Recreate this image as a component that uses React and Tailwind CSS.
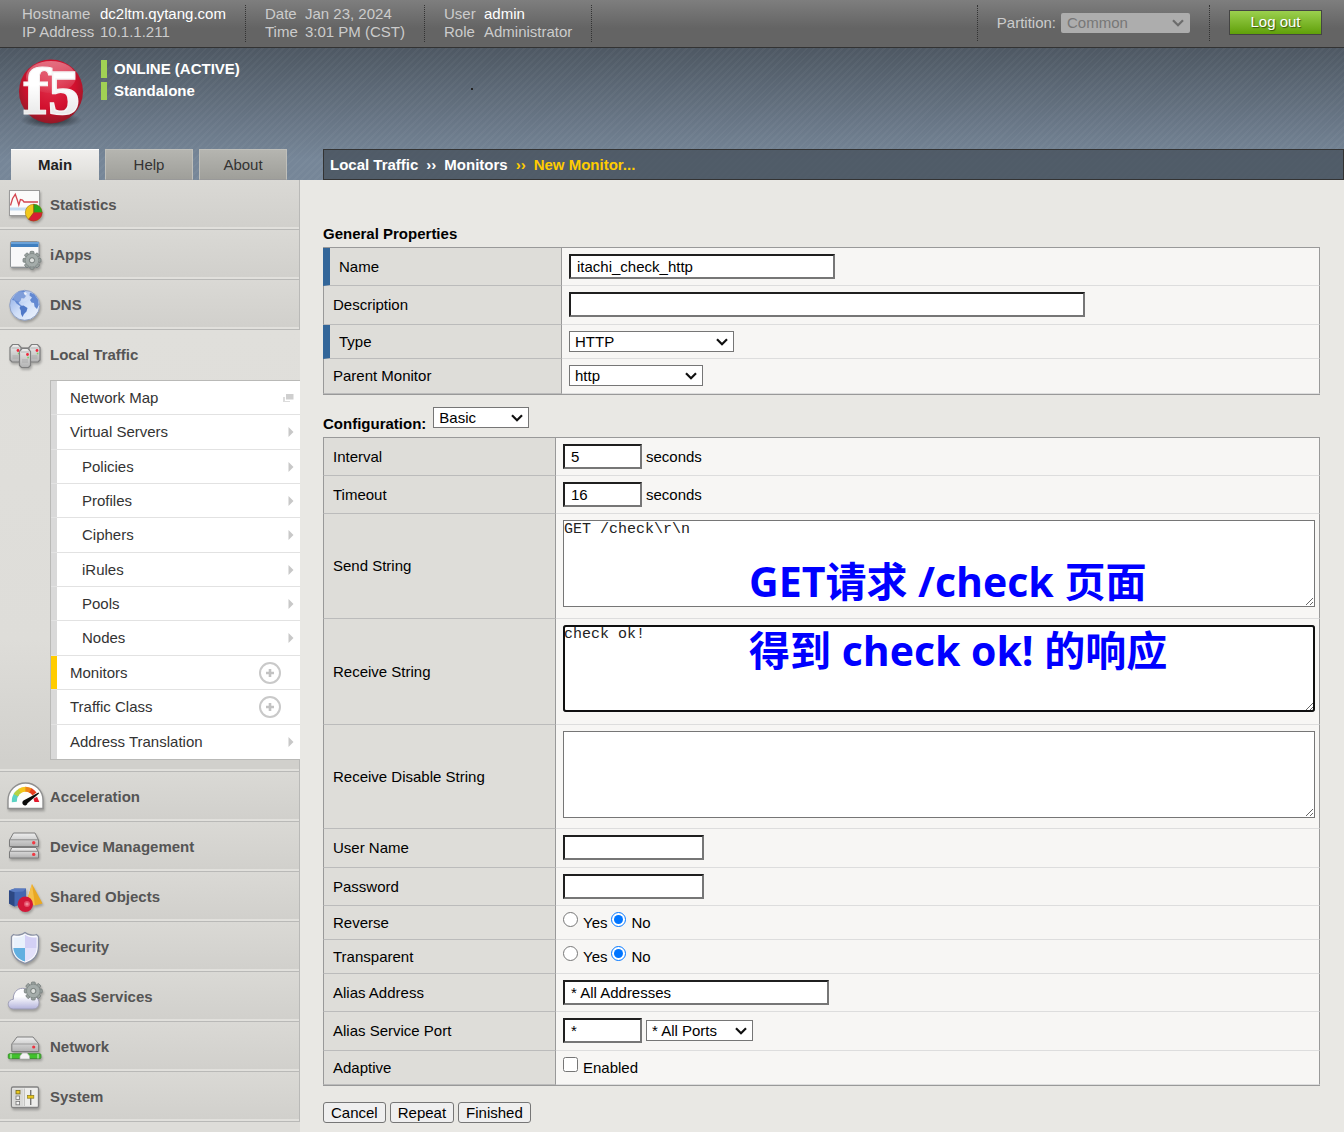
import React from "react";

const gearTeeth = [0, 45, 90, 135, 180, 225, 270, 315];

function Gear({ cx, cy, hub = "#dcdfdd" }) {
  return (
    <g>
      {gearTeeth.map((a) => (
        <rect
          key={a}
          x={cx - 2}
          y={cy - 9}
          width="4"
          height="5"
          rx="1"
          fill="#98a09e"
          stroke="#6f7775"
          strokeWidth="0.7"
          transform={`rotate(${a} ${cx} ${cy})`}
        />
      ))}
      <circle cx={cx} cy={cy} r="6.8" fill="#a4acaa" stroke="#7d8583" strokeWidth="0.7" />
      <circle cx={cx} cy={cy} r="5.6" fill="#a4acaa" />
      <circle cx={cx} cy={cy} r="2.6" fill={hub} stroke="#747c7a" strokeWidth="1" />
    </g>
  );
}

function MiniServer({ x, y, h }) {
  return (
    <g>
      <path
        d={`M${x} ${y + 3} L${x + 2.5} ${y} H${x + 8.5} L${x + 11} ${y + 3} V${y + h - 2} L${x + 9} ${y + h} H${x + 2} L${x} ${y + h - 2} Z`}
        fill="url(#metal)"
        stroke="#7f7f7f"
        strokeWidth="1.2"
      />
      <path d={`M${x + 1.5} ${y + 3.5} H${x + 9.5}`} stroke="#a9a9a9" strokeWidth="0.8" />
      <circle cx={x + 8} cy={y + 6} r="1.4" fill="#f0283c" />
      <rect x={x + 7.8} y={y + 8.2} width="1.6" height="1.6" fill="#7ccf6a" />
      <path d={`M${x + 2.5} ${y + 11.5} H${x + 8.5} M${x + 2.5} ${y + 13.5} H${x + 8.5}`} stroke="#a5a5a5" strokeWidth="0.8" />
    </g>
  );
}

const icons = {
  statistics: (
    <>
      <rect x="9.5" y="10.5" width="30" height="25" fill="#fbfbfb" stroke="#9a9a9a" />
      <rect x="10" y="27.5" width="29" height="3" fill="#c5dcf2" />
      <path d="M10.5 25.5 L12.6 18.5 L15.3 14.3 L17.3 20 L18.8 25 L20.4 19.5 L22.5 20 L24 22 H38" fill="none" stroke="#d4454f" strokeWidth="1.3" />
      <circle cx="33.7" cy="32.6" r="8.6" fill="#f2c81c" />
      <path d="M33.7 32.6 V24 A8.6 8.6 0 0 1 42.3 32.6 Z" fill="#27a81d" />
      <path d="M33.7 32.6 H42.3 A8.6 8.6 0 0 1 28.5 39.4 Z" fill="#d81e35" />
      <path d="M33.7 24 V32.6 L28.5 39.4 M33.7 32.6 H42.3" stroke="#8a4a12" strokeWidth="0.7" fill="none" />
      <circle cx="33.7" cy="32.6" r="8.4" fill="none" stroke="#7a5a20" strokeOpacity="0.6" strokeWidth="0.7" />
    </>
  ),
  iapps: (
    <>
      <rect x="10.5" y="11.5" width="28.5" height="26" rx="1.5" fill="#f8f8f9" stroke="#8e9296" />
      <rect x="11" y="12" width="27.5" height="5" fill="#3f7fc0" />
      <rect x="11" y="12" width="27.5" height="2" fill="#6ba2d8" />
      <path d="M12 36.5 H26" stroke="#d5d5d5" />
      <Gear cx={32} cy={30.3} />
    </>
  ),
  dns: (
    <>
      <circle cx="24.7" cy="25.3" r="15" fill="url(#globe)" stroke="#8fa0c4" />
      <path d="M12 20 L15 14.5 L19 11.8 L24 10.8 L26 12.5 L24.5 14.5 L26 16 L24 18.5 L21.5 18 L20.5 21 L18.5 22.5 L20 24.5 L22 25.5 L20 26 L16.5 23.5 L14.5 20.5 Z" fill="#6389d2" />
      <path d="M20.5 26 L23.5 25.5 L27.5 28 L26.5 31.5 L24 34 L22.5 37 L21 34 L20.8 30.5 L19.5 28 Z" fill="#4f78c8" />
      <path d="M30 12.5 L34.5 14.5 L38 19.5 L38.8 25 L37 29 L34.5 26.5 L34 23 L31.5 22.5 L30 20 L32 17.5 L29.5 15.5 Z" fill="#6389d2" />
      <path d="M23.5 12.5 L25.5 12 L27 14 L25 15 Z" fill="#eef3fc" />
      <ellipse cx="21" cy="17" rx="8" ry="5" fill="#fff" fillOpacity="0.18" />
    </>
  ),
  traffic: (
    <>
      <path d="M18 18 H32 M19 29 H31" stroke="#8a8a8a" strokeWidth="1.4" />
      <MiniServer x={10} y={14.5} h={17.5} />
      <MiniServer x={29} y={14.5} h={17.5} />
      <MiniServer x={19.5} y={18.5} h={19} />
    </>
  ),
  acceleration: (
    <>
      <path d="M8 36.5 V28 A17.5 17 0 0 1 43 28 V36.5 Z" fill="#fdfdfd" stroke="#8f8f8f" strokeWidth="1.4" />
      <path d="M14.3 30 A12 12 0 0 1 17 21.5" fill="none" stroke="#5bd3c4" strokeWidth="5" />
      <path d="M15.8 23.2 A12 12 0 0 1 20.5 18.6" fill="none" stroke="#b5d243" strokeWidth="5" />
      <path d="M19.6 19 A12 12 0 0 1 26 17.2" fill="none" stroke="#f3c51d" strokeWidth="5" />
      <path d="M25.4 17.2 A12 12 0 0 1 31 18.7" fill="none" stroke="#f08418" strokeWidth="5" />
      <path d="M30.5 18.4 A12 12 0 0 1 34.5 22" fill="none" stroke="#e63e20" strokeWidth="5" />
      <path d="M37 24.8 L33.5 26.8 L34.5 30 H39.3 Z" fill="#e2182c" />
      <path d="M23.5 28.6 L38.6 20.6 L39 21.6 L27.5 31.2 A2.6 2.6 0 1 1 23.5 28.6 Z" fill="#0b0b0b" />
    </>
  ),
  device: (
    <>
      <path d="M9.5 18 L13.5 11 H35 L38.5 18 V24.5 H9.5 Z" fill="url(#metal)" stroke="#7c7c7c" />
      <path d="M9.5 17.8 H38.5" stroke="#8c8c8c" />
      <path d="M9.5 30 L12 25.5 H36 L38.5 30 V36 H9.5 Z" fill="url(#metal)" stroke="#7c7c7c" />
      <path d="M9.5 29.3 H38.5" stroke="#8c8c8c" />
      <circle cx="33.7" cy="20.8" r="1.7" fill="#ef3a44" />
      <circle cx="33.7" cy="32.4" r="1.7" fill="#ef3a44" />
    </>
  ),
  shared: (
    <>
      <path d="M9 18.5 L14.5 16.5 H26 V31 L14.5 34.5 L9 31.5 Z" fill="#4467b0" />
      <path d="M9 18.5 L14.5 20 V34.5 L9 31.5 Z" fill="#2d4883" />
      <path d="M9 18.5 L14.5 16.5 L26 16.8 L23 19.5 L14.5 20 Z" fill="#5a7bc0" />
      <path d="M32 12 L26.5 30 L35 33.4 L42.6 31.5 Z" fill="#e9a823" />
      <path d="M32 12 L26.5 30 L35 33.4 Z" fill="#f5c04a" />
      <circle cx="25.3" cy="32.3" r="7.7" fill="#d21738" />
      <circle cx="27" cy="32" r="3" fill="#e5506a" />
      <circle cx="27" cy="32" r="1.6" fill="#f28a9a" />
    </>
  ),
  security: (
    <>
      <path d="M25 10.5 C22 13 16 14 13.5 12.5 L11.5 14.5 V24 C11.5 33 17 39 25 41.3 C33 39 38.5 33 38.5 24 V14.5 L36.5 12.5 C34 14 28 13 25 10.5 Z" fill="#fafbfe" stroke="#8a91a4" strokeWidth="1.3" />
      <path d="M25 12.5 V26 H13.5 V15.3 C18 16 22.5 15 25 12.5 Z" fill="#e9f1fc" />
      <path d="M25 12.5 V26 H36.6 V15.3 C32 16 27.5 15 25 12.5 Z" fill="#d3d0f5" />
      <path d="M13.3 26 H25 V39.6 C18.5 37.5 14 33 13.3 26 Z" fill="#62afe0" />
      <path d="M36.7 26 H25 V39.6 C31.5 37.5 36 33 36.7 26 Z" fill="#e3e1fa" />
    </>
  ),
  saas: (
    <>
      <path d="M13.5 37 C9.5 37 8 34 8.3 31.5 C8.6 28.8 11 27.3 13.4 27.3 C12.8 21 17 16.3 22.5 16.3 C27 16.3 30.5 19.4 31 24 C36 23.5 39 27 39 30.8 C39 34.5 36.6 37 33 37 Z" fill="url(#cloud)" stroke="#9c9cb4" />
      <Gear cx={33.3} cy={19} />
    </>
  ),
  network: (
    <>
      <path d="M11.8 22 L17 15 H33 L38.7 22 V29.5 H11.8 Z" fill="url(#metal)" stroke="#7c7c7c" />
      <path d="M11.8 22 H38.7" stroke="#9a9a9a" />
      <circle cx="33.7" cy="25" r="1.6" fill="#ee3340" />
      <rect x="8.3" y="31.8" width="32.6" height="4.8" rx="1" fill="#41c22c" stroke="#3c8f30" />
      <path d="M11 32 V36.5 M38 32 V36.5" stroke="#d8f5d0" />
      <path d="M20 37 V34 L22.5 31 H27 L29.5 34 V37 Z" fill="#f4f4f4" stroke="#b0b0b0" strokeWidth="0.7" />
    </>
  ),
  system: (
    <>
      <rect x="11.5" y="15" width="27" height="20.5" rx="1.5" fill="#ededeb" stroke="#828282" strokeWidth="1.3" />
      <rect x="13" y="16.5" width="10.5" height="17.5" fill="#d9d9d7" />
      <path d="M24.5 16.5 V34" stroke="#c4c4c2" />
      <rect x="16" y="18.5" width="4" height="3.4" fill="#e9c71e" stroke="#75691a" strokeWidth="0.8" />
      <rect x="16" y="24" width="3.6" height="3.4" fill="#f4f4f4" stroke="#777" strokeWidth="0.8" />
      <rect x="16" y="29.4" width="3.6" height="3.4" fill="#f4f4f4" stroke="#777" strokeWidth="0.8" />
      <path d="M30.7 18 V33" stroke="#777" strokeWidth="1.4" />
      <rect x="27.6" y="23.4" width="6.2" height="2.8" fill="#e9c71e" stroke="#8b7c1c" strokeWidth="0.7" />
    </>
  ),
};

function Icon({ name }) {
  return (
    <svg width="50" height="50" viewBox="0 0 50 50" className="shrink-0 drop-shadow-[1px_2px_1px_rgba(0,0,0,0.25)]" aria-hidden="true">
      {icons[name]}
    </svg>
  );
}

function NavItem({ icon, children }) {
  return (
    <a
      href="#"
      className="flex h-[50px] items-center border-r border-b border-[#b9b9b7] bg-[linear-gradient(to_bottom,#dad9d5,#d1d0cc_47px,#e1e0dc_47px)] font-bold text-[#555]"
    >
      <Icon name={icon} />
      {children}
    </a>
  );
}

const subItems = [
  { label: "Network Map", mark: "window" },
  { label: "Virtual Servers", tall: true },
  { label: "Policies", nested: true },
  { label: "Profiles", nested: true },
  { label: "Ciphers", nested: true, tall: true },
  { label: "iRules", nested: true },
  { label: "Pools", nested: true },
  { label: "Nodes", nested: true, tall: true },
  { label: "Monitors", mark: "plus", active: true },
  { label: "Traffic Class", mark: "plus", tall: true },
  { label: "Address Translation" },
];

function Mark({ kind }) {
  if (kind === "window")
    return (
      <svg width="11" height="10" viewBox="0 0 11 10" className="mr-1.5" aria-hidden="true">
        <path d="M0 4 H2 V8 H7 V9 H0 Z" fill="#dcdcdc" />
        <rect x="3" y="1" width="7.5" height="5.5" fill="#cfcfcf" />
      </svg>
    );
  if (kind === "plus")
    return (
      <svg width="24" height="24" viewBox="0 0 24 24" className="mr-[18px]" aria-hidden="true">
        <circle cx="12" cy="12" r="10" fill="#fff" stroke="#c9c9c9" strokeWidth="2" />
        <path d="M12 8 V16 M8 12 H16" stroke="#c2c2c2" strokeWidth="2.6" />
      </svg>
    );
  return (
    <svg width="6" height="10" viewBox="0 0 6 10" className="mr-1.5" aria-hidden="true">
      <path d="M0.5 0 L5.5 5 L0.5 10 Z" fill="#c8c8c8" />
    </svg>
  );
}

function Sidebar() {
  return (
    <nav className="w-[300px] shrink-0 bg-[#deddd9]">
      <NavItem icon="statistics">Statistics</NavItem>
      <NavItem icon="iapps">iApps</NavItem>
      <NavItem icon="dns">DNS</NavItem>
      <div className="border-b border-[#b9b9b7] bg-[linear-gradient(to_bottom,#e0dfdb,#deddd9_70%,#d0cfcb)]">
        <a href="#" className="flex h-[50px] items-center font-bold text-[#555]">
          <Icon name="traffic" />
          Local Traffic
        </a>
        <ul className="ml-[50px] border-y border-l border-[#b9b9b7] bg-white">
          {subItems.map((s) => (
            <li
              key={s.label}
              className={`flex border-b border-[#e2e2e2] last:border-b-0 ${s.tall ? "h-[35px]" : "h-[34px]"}`}
            >
              <span className={`w-1.5 shrink-0 ${s.active ? "bg-[#ffcc00]" : "bg-[#d9d9d9]"}`} />
              <a
                href="#"
                className={`flex flex-1 items-center justify-between text-[#333] ${s.nested ? "pl-[25px]" : "pl-[13px]"}`}
              >
                {s.label}
                <Mark kind={s.mark} />
              </a>
            </li>
          ))}
        </ul>
        <div className="h-[11px] border-r border-[#b9b9b7] bg-[linear-gradient(to_bottom,#d1d0cc_9px,#e1e0dc_9px)]" />
      </div>
      <NavItem icon="acceleration">Acceleration</NavItem>
      <NavItem icon="device">Device Management</NavItem>
      <NavItem icon="shared">Shared Objects</NavItem>
      <NavItem icon="security">Security</NavItem>
      <NavItem icon="saas">SaaS Services</NavItem>
      <NavItem icon="network">Network</NavItem>
      <NavItem icon="system">System</NavItem>
    </nav>
  );
}

function Chevron({ className }) {
  return (
    <svg
      width="12"
      height="8"
      viewBox="0 0 12 8"
      className={`pointer-events-none absolute inset-y-0 right-1.5 my-auto ${className}`}
      aria-hidden="true"
    >
      <path d="M1 1.2 L6 6.2 L11 1.2" fill="none" stroke="currentColor" strokeWidth="2.2" />
    </svg>
  );
}

function Info({ rows, className }) {
  return (
    <dl className={`grid h-[37px] content-start border-r border-dotted border-[#333] text-[#ccc] ${className}`}>
      {rows.map(([k, v, strong]) => (
        <React.Fragment key={k}>
          <dt>{k}</dt>
          <dd className={strong ? "text-white" : ""}>{v}</dd>
        </React.Fragment>
      ))}
    </dl>
  );
}

function TopBar() {
  return (
    <div className="flex h-12 justify-between border-b border-[#333] bg-[linear-gradient(to_bottom,#7e7e7e,#646464_60%,#646464)] pt-[5px]">
      <div className="flex">
        <Info
          className="w-[246px] grid-cols-[78px_1fr] pl-[22px]"
          rows={[
            ["Hostname", "dc2ltm.qytang.com", true],
            ["IP Address", "10.1.1.211"],
          ]}
        />
        <Info
          className="w-[179px] grid-cols-[40px_1fr] pl-[19px]"
          rows={[
            ["Date", "Jan 23, 2024"],
            ["Time", "3:01 PM (CST)"],
          ]}
        />
        <Info
          className="w-[167px] grid-cols-[40px_1fr] pl-[19px]"
          rows={[
            ["User", "admin", true],
            ["Role", "Administrator"],
          ]}
        />
      </div>
      <div className="flex">
        <div className="flex h-9 items-center gap-[5px] border-x border-dotted border-[#333] px-[19px] text-[#ccc]">
          <label htmlFor="partition">Partition:</label>
          <span className="relative">
            <select
              id="partition"
              disabled
              className="block h-5 w-[129px] appearance-none rounded-xs bg-[#adadad] pl-1.5 leading-[18px] text-[#777] opacity-100"
            >
              <option>Common</option>
            </select>
            <Chevron className="text-[#6c6c6c]" />
          </span>
        </div>
        <button
          type="button"
          className="mt-[5px] mr-[22px] ml-[19px] flex h-[25px] w-[93px] justify-center border border-[#444] bg-[linear-gradient(to_bottom,#9bd04e,#60a00a)] pt-0.5 text-white text-shadow-[1px_1px_1px_rgba(0,0,0,0.5)]"
        >
          Log out
        </button>
      </div>
    </div>
  );
}

function Header() {
  return (
    <header className="bg-[repeating-linear-gradient(135deg,rgba(255,255,255,0.03)_0_2px,transparent_2px_5px),linear-gradient(to_bottom,#4e5863,#768698_85%,#768698)]">
      <div className="flex h-[101px]">
        <svg width="101" height="101" viewBox="0 0 101 101" role="img" aria-label="f5">
          <defs>
            <radialGradient id="ball" cx="0.5" cy="0.4" r="0.62">
              <stop offset="0" stopColor="#e0304a" />
              <stop offset="0.6" stopColor="#d2102e" />
              <stop offset="1" stopColor="#8c1a26" />
            </radialGradient>
            <radialGradient id="ballShadow">
              <stop offset="0" stopColor="#000" stopOpacity="0.7" />
              <stop offset="1" stopColor="#000" stopOpacity="0" />
            </radialGradient>
            <linearGradient id="shine" x1="0" y1="0" x2="0" y2="1">
              <stop offset="0" stopColor="#fff" stopOpacity="0.4" />
              <stop offset="1" stopColor="#fff" stopOpacity="0.05" />
            </linearGradient>
            <linearGradient id="letters" x1="0" y1="0" x2="0" y2="1">
              <stop offset="0.4" stopColor="#fff" />
              <stop offset="1" stopColor="#dedede" />
            </linearGradient>
            <linearGradient id="metal" x1="0" y1="0" x2="0" y2="1">
              <stop offset="0" stopColor="#eeeeee" />
              <stop offset="1" stopColor="#b2b2b2" />
            </linearGradient>
            <linearGradient id="cloud" x1="0" y1="0" x2="0" y2="1">
              <stop offset="0.4" stopColor="#fdfdff" />
              <stop offset="1" stopColor="#b3b3dc" />
            </linearGradient>
            <linearGradient id="globe" x1="0" y1="0" x2="1" y2="1">
              <stop offset="0" stopColor="#88a8e4" />
              <stop offset="0.5" stopColor="#cfdef8" />
              <stop offset="1" stopColor="#f0f5fe" />
            </linearGradient>
          </defs>
          <ellipse cx="51" cy="72" rx="31" ry="8" fill="url(#ballShadow)" />
          <circle cx="51" cy="43.5" r="32" fill="url(#ball)" />
          <ellipse cx="51" cy="29" rx="25" ry="16" fill="url(#shine)" />
          <g fontWeight="bold" fill="url(#letters)" stroke="#f4f4f4">
            <text x="22" y="66" fontSize="62" fontFamily="DejaVu Serif, serif" strokeWidth="1">
              f
            </text>
            <text x="48" y="66" fontSize="64" fontFamily="Liberation Serif, serif" strokeWidth="1.5">
              5
            </text>
          </g>
        </svg>
        <div className="flex flex-col gap-1 pt-3 font-bold text-white">
          <div className="flex items-center gap-[7px]">
            <span className="h-[18px] w-1.5 bg-[#a1d154]" />
            ONLINE (ACTIVE)
          </div>
          <div className="flex items-center gap-[7px]">
            <span className="h-[18px] w-1.5 bg-[#a1d154]" />
            Standalone
          </div>
        </div>
        <span className="mt-10 ml-[231px] size-0.5 bg-[#222]" />
      </div>
      <div className="flex h-[31px]">
        <div className="flex w-[300px] shrink-0 gap-1.5 pl-[11px]">
          <button type="button" className="w-[88px] border-t border-white bg-[linear-gradient(to_bottom,#f0efed,#deddd9)] font-bold text-[#222]">
            Main
          </button>
          <button type="button" className="w-[88px] border border-[#bfbfba] border-b-[#999] bg-[linear-gradient(to_bottom,#b5b5b0,#9f9f9a)] text-[#333]">
            Help
          </button>
          <button type="button" className="w-[88px] border border-[#bfbfba] border-b-[#999] bg-[linear-gradient(to_bottom,#b5b5b0,#9f9f9a)] text-[#333]">
            About
          </button>
        </div>
        <div className="ml-[23px] flex flex-1 items-center gap-2 border border-[#333] bg-[#444d58]/75 pl-1.5 font-bold text-white">
          <a href="#">Local Traffic</a>
          <span>››</span>
          <a href="#">Monitors</a>
          <span className="text-[#ffcc00]">››</span>
          <span className="text-[#ffcc00]">New Monitor...</span>
        </div>
      </div>
    </header>
  );
}

function Row({ label, htmlFor, required, labelWidth, height, children }) {
  return (
    <tr className={height}>
      <th
        scope="row"
        className={`border-r border-b border-r-[#999] border-b-[#bbb] bg-[#deddd9] pl-[9px] text-left font-normal ${labelWidth} ${
          required ? "border-l-[7px] border-l-[#336699]" : "border-l border-l-[#999]"
        }`}
      >
        {htmlFor ? <label htmlFor={htmlFor}>{label}</label> : label}
      </th>
      <td className="border-r border-b border-r-[#999] border-b-[#ddd] bg-[#f7f6f4] pt-1.5 pr-1 pl-[7px] align-top">
        {children}
      </td>
    </tr>
  );
}

function Text({ width, ...props }) {
  return (
    <input
      type="text"
      className={`h-[25px] border-2 border-t-[#1f1f1f] border-r-[#767676] border-b-[#767676] border-l-[#1f1f1f] bg-white px-1.5 ${width}`}
      {...props}
    />
  );
}

function Select({ width, options, ...props }) {
  return (
    <div className={`relative ${width}`}>
      <select
        className="block h-[21px] w-full appearance-none border border-[#767676] bg-white pl-[5px] leading-[18px]"
        {...props}
      >
        {options.map((o) => (
          <option key={o}>{o}</option>
        ))}
      </select>
      <Chevron className="text-[#101010]" />
    </div>
  );
}

function YesNo({ name }) {
  return (
    <div className="flex gap-1">
      {["Yes", "No"].map((v) => (
        <label key={v} className="flex items-start gap-[5px]">
          <input type="radio" name={name} defaultChecked={v === "No"} className="size-[15px] accent-[#0075ff]" />
          <span className="pt-0.5">{v}</span>
        </label>
      ))}
    </div>
  );
}

const areaClass =
  "block h-[87px] w-full resize border border-[#767676] bg-white font-['Liberation_Mono',monospace] leading-[17px] text-[#222]";
const note =
  "pointer-events-none absolute left-[186px] font-['Open_Sans','Noto_Sans_CJK_SC',sans-serif] text-[41px] leading-[50px] font-bold whitespace-nowrap text-[#0000ff]";
const tableClass = "w-full border-separate border-spacing-0 border-y border-[#999]";
const buttonClass = "h-[21px] rounded-[3px] border border-[#767676] bg-[#efefef] px-[7px]";

function Main() {
  return (
    <main className="flex-1 pt-[45px] pr-6 pb-[9px] pl-[23px]">
      <form onSubmit={(e) => e.preventDefault()}>
        <h2 className="mb-1 font-bold">General Properties</h2>
        <table className={tableClass}>
          <tbody>
            <Row label="Name" htmlFor="name" required labelWidth="w-[239px]" height="h-[38px]">
              <Text id="name" width="w-[266px]" defaultValue="itachi_check_http" />
            </Row>
            <Row label="Description" htmlFor="description" labelWidth="w-[239px]" height="h-[39px]">
              <Text id="description" width="w-[516px]" />
            </Row>
            <Row label="Type" htmlFor="type" required labelWidth="w-[239px]" height="h-[34px]">
              <Select id="type" width="w-[165px]" options={["HTTP"]} />
            </Row>
            <Row label="Parent Monitor" htmlFor="parent" labelWidth="w-[239px]" height="h-[35px]">
              <Select id="parent" width="w-[134px]" options={["http"]} />
            </Row>
          </tbody>
        </table>

        <div className="mt-3 mb-1 flex h-[26px] items-start gap-[7px]">
          <label htmlFor="configuration" className="self-end font-bold">
            Configuration:
          </label>
          <Select id="configuration" width="w-24" options={["Basic", "Advanced"]} />
        </div>
        <table className={tableClass}>
          <tbody>
            <Row label="Interval" htmlFor="interval" labelWidth="w-[233px]" height="h-[38px]">
              <div className="flex items-center gap-1">
                <Text id="interval" width="w-[79px]" defaultValue="5" />
                seconds
              </div>
            </Row>
            <Row label="Timeout" htmlFor="timeout" labelWidth="w-[233px]" height="h-[38px]">
              <div className="flex items-center gap-1">
                <Text id="timeout" width="w-[79px]" defaultValue="16" />
                seconds
              </div>
            </Row>
            <Row label="Send String" htmlFor="send" labelWidth="w-[233px]" height="h-[105px]">
              <div className="relative">
                <textarea id="send" className={areaClass} defaultValue={"GET /check\\r\\n"} />
                <p className={`top-9 ${note}`}>GET请求 /check 页面</p>
              </div>
            </Row>
            <Row label="Receive String" htmlFor="receive" labelWidth="w-[233px]" height="h-[106px]">
              <div className="relative">
                <textarea
                  id="receive"
                  className={`${areaClass} rounded-[3px] outline-2 -outline-offset-2 outline-[#101010]`}
                  defaultValue="check ok!"
                />
                <p className={`top-0 ${note}`}>得到 check ok! 的响应</p>
              </div>
            </Row>
            <Row label="Receive Disable String" htmlFor="disable" labelWidth="w-[233px]" height="h-[104px]">
              <textarea id="disable" className={areaClass} />
            </Row>
            <Row label="User Name" htmlFor="user" labelWidth="w-[233px]" height="h-[39px]">
              <Text id="user" width="w-[141px]" />
            </Row>
            <Row label="Password" htmlFor="password" labelWidth="w-[233px]" height="h-[38px]">
              <Text id="password" type="password" width="w-[141px]" />
            </Row>
            <Row label="Reverse" labelWidth="w-[233px]" height="h-[34px]">
              <YesNo name="reverse" />
            </Row>
            <Row label="Transparent" labelWidth="w-[233px]" height="h-[34px]">
              <YesNo name="transparent" />
            </Row>
            <Row label="Alias Address" htmlFor="alias" labelWidth="w-[233px]" height="h-[38px]">
              <Text id="alias" width="w-[266px]" defaultValue="* All Addresses" />
            </Row>
            <Row label="Alias Service Port" htmlFor="port" labelWidth="w-[233px]" height="h-[39px]">
              <div className="flex items-center gap-1">
                <Text id="port" width="w-[79px]" defaultValue="*" />
                <Select aria-label="Service port" width="w-[107px]" options={["* All Ports"]} />
              </div>
            </Row>
            <Row label="Adaptive" labelWidth="w-[233px]" height="h-[34px]">
              <label className="flex items-start gap-[5px]">
                <input type="checkbox" className="size-[15px]" />
                <span className="pt-0.5">Enabled</span>
              </label>
            </Row>
          </tbody>
        </table>

        <div className="mt-4 flex gap-1">
          <button type="button" className={buttonClass}>Cancel</button>
          <button type="button" className={buttonClass}>Repeat</button>
          <button type="submit" className={buttonClass}>Finished</button>
        </div>
      </form>
    </main>
  );
}

export default function App() {
  return (
    <div className="flex min-h-screen flex-col bg-[#e9e8e4] font-['Liberation_Sans',Arial,sans-serif] text-[15px] leading-[18px] text-black">
      <TopBar />
      <Header />
      <div className="flex flex-1">
        <Sidebar />
        <Main />
      </div>
    </div>
  );
}
